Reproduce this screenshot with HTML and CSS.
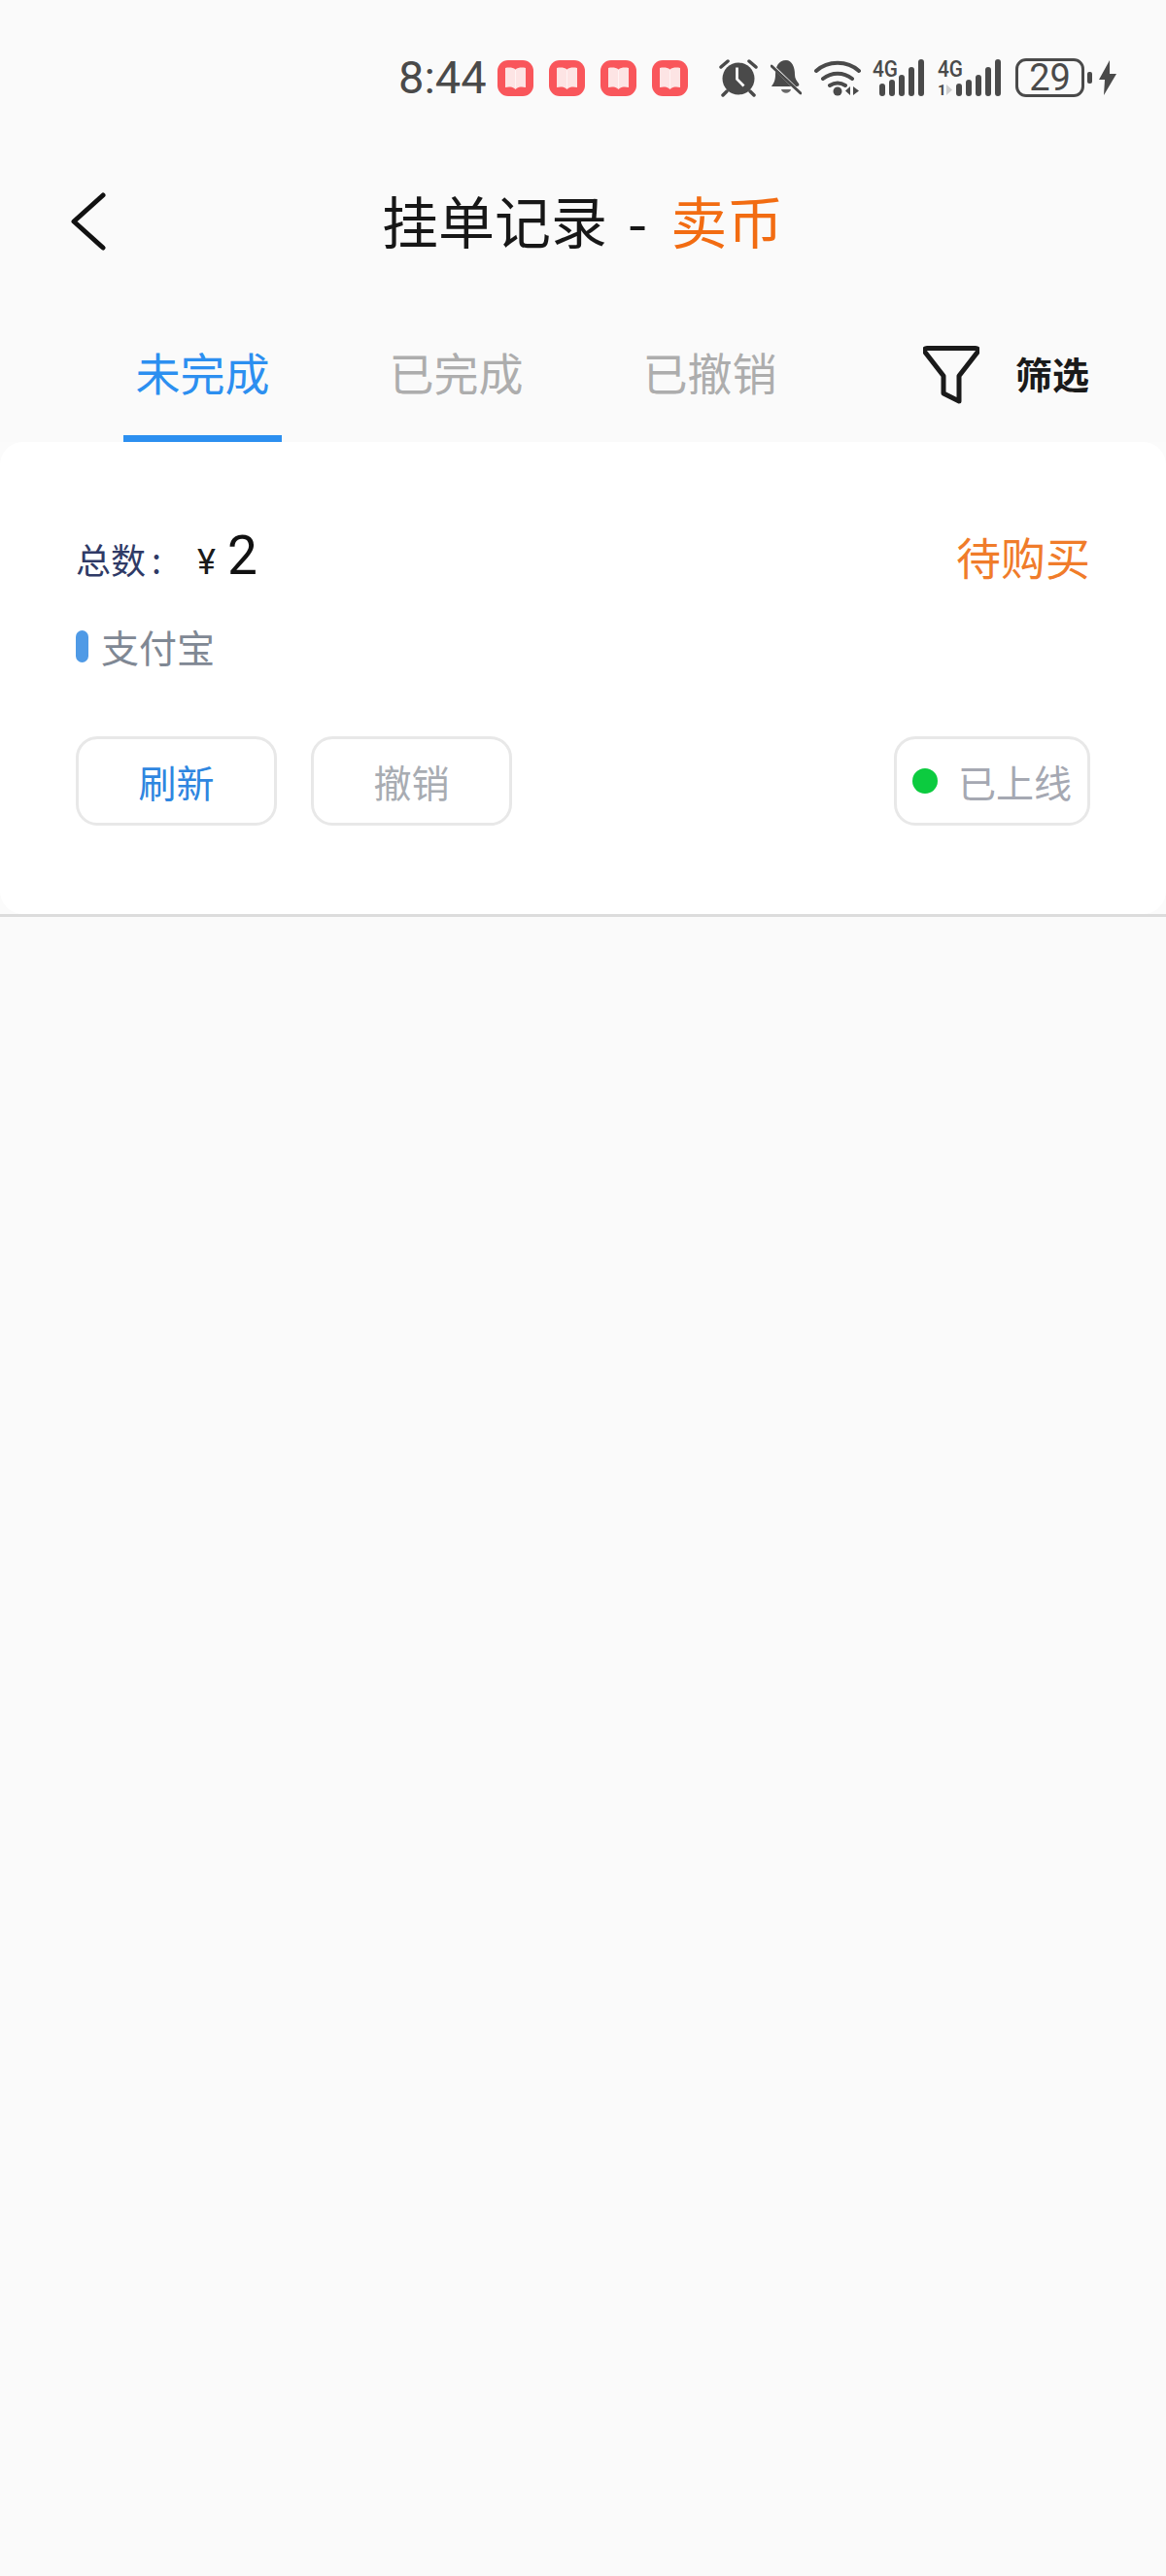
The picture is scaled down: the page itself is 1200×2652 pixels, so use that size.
FILE: index.html
```html
<!DOCTYPE html>
<html lang="zh">
<head>
<meta charset="utf-8">
<title>挂单记录</title>
<link rel="stylesheet" href="styles.css">
</head>
<body>
<svg class="defs" width="0" height="0">
  <symbol id="book" viewBox="0 0 37 37">
    <rect width="37" height="37" rx="11" fill="#f9565b"/>
    <path d="M8 8c4-1 8-.5 10.500 1.500c2.500-2 6.500-2.500 10.500-1.500v20c-4-1-7-.5-9 .8l-1.500 1.200l-1.500-1.200c-2-1.300-5-1.800-9-.8z" fill="#fde4e4"/>
    <path d="M18.500 10v18" stroke="#fff3f3" stroke-width="1"/>
  </symbol>
</svg>
<div class="screen">
  <div class="status">
    <span class="time">8:44</span>
    <svg class="book book-first"><use href="#book"/></svg>
    <svg class="book"><use href="#book"/></svg>
    <svg class="book"><use href="#book"/></svg>
    <svg class="book"><use href="#book"/></svg>
    <svg class="ic alarm" viewBox="0 0 40 40">
      <circle cx="20" cy="21" r="16.500" fill="#4a4a4a"/>
      <path d="M2 9l7-6M38 9l-7-6M8 34l-4 4M32 34l4 4" stroke="#4a4a4a" stroke-width="3.500" stroke-linecap="round"/>
      <path d="M18.500 9.500v12l7 7" fill="none" stroke="#fafafa" stroke-width="2.800"/>
    </svg>
    <svg class="ic bell" viewBox="0 0 32 40">
      <path d="M16 2c-8 0-11 7-11 15c0 6-2 9-4 12h26c2 0 3-2 2-3c-2-3-4-5-4-9c0-8-3-15-9-15z" fill="#4a4a4a"/>
      <path d="M11 32h10c-1 5-9 5-10 0z" fill="#6a6a6a"/>
      <path d="M0 6l30 29" stroke="#fafafa" stroke-width="3.500"/>
      <path d="M1 8l30 28" stroke="#4a4a4a" stroke-width="3" stroke-linecap="round"/>
    </svg>
    <svg class="ic wifi" viewBox="0 0 48 40">
      <path d="M2 13C14 2 34 2 46 13M9 21c9-7 21-7 30 0M16 28c5-3 11-3 16 0" fill="none" stroke="#4a4a4a" stroke-width="4" stroke-linecap="round"/>
      <circle cx="24" cy="34" r="4.500" fill="#4a4a4a"/>
      <path d="M37 29v9l-5-4.500zM40 29v9l6-4.500z" fill="#4a4a4a"/>
    </svg>
    <svg class="sig sig1" viewBox="0 -8 56 54">
      <text class="net" x="1" y="19" textLength="26" lengthAdjust="spacingAndGlyphs">4G</text>
      <path d="M11 29v7M21 25v11M31 20v16M41 12v24M51 4v32" stroke="#4a4a4a" stroke-width="6" stroke-linecap="round"/>
    </svg>
    <svg class="sig sig2" viewBox="0 -8 68 54">
      <text class="net" x="1" y="19" textLength="26" lengthAdjust="spacingAndGlyphs">4G</text>
      <text class="net-sm" x="1" y="38">1</text>
      <path d="M10 27v11l6-5.500z" fill="#cfcfcf"/>
      <path d="M23 29v7M33 25v11M43 20v16M53 12v24M63 4v32" stroke="#4a4a4a" stroke-width="6" stroke-linecap="round"/>
    </svg>
    <div class="battery">
      <div class="cell">29</div>
      <div class="tip"></div>
    </div>
    <svg class="ic bolt" viewBox="0 0 18 38">
      <path d="M11 1L0 21h6l-1 16L18 15h-7z" fill="#4a4a4a"/>
    </svg>
  </div>

  <header class="nav">
    <svg class="back" viewBox="0 0 36 60">
      <path d="M33 3L3 30l30 27" fill="none" stroke="#111" stroke-width="5" stroke-linecap="round" stroke-linejoin="round"/>
    </svg>
    <h1 class="title">挂单记录<span class="dash">-</span><span class="title-sell">卖币</span></h1>
  </header>

  <nav class="tabs">
    <div class="tab tab-active">未完成</div>
    <div class="tab">已完成</div>
    <div class="tab">已撤销</div>
    <div class="filter">
      <svg class="funnel" viewBox="0 0 58 60">
        <path d="M4 2.500h50c2.500 0 3.500 2 2 4L37 31v26l-16-8V31L2 6.500c-1.500-2-.5-4 2-4z" fill="none" stroke="#1a1a1a" stroke-width="5" stroke-linejoin="round"/>
      </svg>
      <span class="filter-label">筛选</span>
    </div>
  </nav>

  <section class="list">
    <article class="card">
      <div class="row-top">
        <div class="total">
          <span class="total-label">总数<span class="colon">:</span></span>
          <span class="yen">¥</span>
          <span class="amount">2</span>
        </div>
        <span class="state">待购买</span>
      </div>
      <div class="pay">
        <span class="pay-mark"></span>
        <span class="pay-name">支付宝</span>
      </div>
      <div class="actions">
        <button class="btn btn-blue">刷新</button>
        <button class="btn btn-grey">撤销</button>
        <button class="btn online"><span class="dot"></span><span>已上线</span></button>
      </div>
    </article>
  </section>
</div>
</body>
</html>
```
FILE: styles.css
```css
* { box-sizing: border-box; }
html, body { margin: 0; padding: 0; background: #fafafa; }
body { font-family: "Noto Sans CJK SC", "Noto Sans", sans-serif; color: #111; }
.defs { display: block; height: 0; }
.screen { width: 1200px; height: 2652px; background: #fafafa; overflow: hidden; }

.status { height: 160px; padding: 60px 0 0 410px; display: flex; align-items: flex-start; }
.time { width: 90px; height: 40px; font: 400 47px/40px Roboto, sans-serif; color: #4a4a4a; white-space: nowrap; }
.book { width: 37px; height: 37px; margin: 2px 0 0 16px; }
.book-first { margin-left: 12px; }
.ic { display: block; height: 40px; flex: none; }
.alarm { width: 40px; margin-left: 32px; }
.bell { width: 32px; margin-left: 13px; }
.wifi { width: 48px; margin-left: 13px; }
.sig { display: block; height: 54px; margin-top: -8px; flex: none; }
.sig1 { width: 56px; margin-left: 11px; }
.sig2 { width: 68px; margin-left: 11px; }
.net { font: 500 24px Roboto, sans-serif; fill: #4a4a4a; }
.net-sm { font: 700 15px Roboto, sans-serif; fill: #4a4a4a; }
.battery { width: 79px; height: 40px; margin-left: 13px; display: flex; align-items: center; }
.cell { width: 71px; height: 40px; border: 3px solid #4a4a4a; border-radius: 11px; text-align: center; font: 400 38px/34px Roboto, sans-serif; color: #4a4a4a; }
.tip { width: 5px; height: 12px; margin-left: 3px; background: #4a4a4a; border-radius: 2px; }
.bolt { width: 18px; margin-left: 7px; }

.nav { height: 136px; padding-left: 73px; display: flex; align-items: center; }
.back { width: 36px; height: 60px; flex: none; }
.title { margin: -5px 0 0 284px; font-size: 58px; font-weight: 400; line-height: 80px; color: #171717; white-space: nowrap; }
.dash { margin: 0 24px 0 21px; }
.title-sell { color: #f26c12; }

.tabs { height: 159px; padding: 56px 0 0 78px; display: flex; }
.tab { width: 261px; height: 103px; display: flex; align-items: flex-start; justify-content: center; position: relative; font-size: 46px; font-weight: 400; line-height: 60px; color: #adadad; }
.tab-active { color: #2c8ff0; }
.tab-active::after { content: ""; position: absolute; left: 49px; width: 163px; bottom: 0; height: 7px; background: #2c8ff0; }
.filter { margin: 4px 0 0 89px; height: 60px; display: flex; align-items: flex-start; }
.funnel { width: 58px; height: 60px; flex: none; }
.filter-label { margin: 3px 0 0 37px; font-size: 38px; line-height: 50px; font-weight: 700; color: #1a1a1a; }

.list { border-bottom: 3px solid #dcdcdc; height: 489px; background: #fbfbfb; }
.card { height: 486px; background: #fff; border-radius: 24px; padding: 77px 78px 0; }
.row-top { display: flex; justify-content: space-between; align-items: center; height: 80px; }
.total { display: flex; align-items: baseline; height: 80px; }
.total-label { font-size: 36px; line-height: 56px; color: #2f3a66; width: 125px; }
.colon { margin-left: 6px; }
.yen { font: 400 36px/50px Roboto, sans-serif; color: #1a1a1a; width: 31px; }
.amount { font: 400 55px/80px Roboto, sans-serif; color: #111; }
.state { font-size: 46px; font-weight: 400; line-height: 62px; color: #f07c2a; }

.pay { margin-top: 27px; height: 52px; display: flex; align-items: center; }
.pay-mark { width: 13px; height: 33px; border-radius: 7px; background: #4f9ae6; }
.pay-name { margin-left: 13px; font-size: 39px; line-height: 52px; color: #7f8894; }

.actions { margin-top: 67px; display: flex; align-items: flex-start; }
.btn { height: 92px; width: 207px; padding: 0; background: #fff; border: 3px solid #e8e8e8; border-radius: 22px; font-family: inherit; font-size: 39px; line-height: 50px; }
.btn-blue { color: #2e86e0; }
.btn-grey { color: #a8acb2; margin-left: 35px; }
.online { width: 202px; margin-left: auto; display: flex; align-items: center; padding-left: 16px; color: #a5a8b2; }
.dot { width: 26px; height: 26px; border-radius: 50%; background: #0ccb3f; margin-right: 21px; }
```
